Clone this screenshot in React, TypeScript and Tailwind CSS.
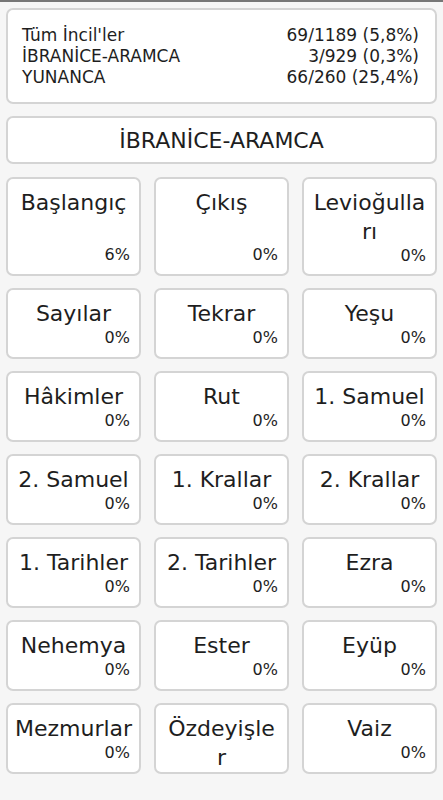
const books = [
  { name: "Başlangıç", pct: "6%" },
  { name: "Çıkış", pct: "0%" },
  { name: "Levioğulları", pct: "0%" },
  { name: "Sayılar", pct: "0%" },
  { name: "Tekrar", pct: "0%" },
  { name: "Yeşu", pct: "0%" },
  { name: "Hâkimler", pct: "0%" },
  { name: "Rut", pct: "0%" },
  { name: "1. Samuel", pct: "0%" },
  { name: "2. Samuel", pct: "0%" },
  { name: "1. Krallar", pct: "0%" },
  { name: "2. Krallar", pct: "0%" },
  { name: "1. Tarihler", pct: "0%" },
  { name: "2. Tarihler", pct: "0%" },
  { name: "Ezra", pct: "0%" },
  { name: "Nehemya", pct: "0%" },
  { name: "Ester", pct: "0%" },
  { name: "Eyüp", pct: "0%" },
  { name: "Mezmurlar", pct: "0%" },
  // title wraps in the app and pushes the percent out of the card
  { name: "Özdeyişle\nr", pct: "" },
  { name: "Vaiz", pct: "0%" },
];

const stats = [
  { label: "Tüm İncil'ler", value: "69/1189 (5,8%)" },
  { label: "İBRANİCE-ARAMCA", value: "3/929 (0,3%)" },
  { label: "YUNANCA", value: "66/260 (25,4%)" },
];

export default function App() {
  return (
    <div className="h-[800px] w-[443px] overflow-hidden bg-[#f6f6f6] font-['DejaVu_Sans',sans-serif] text-[#1e1e1e]">
      <div className="h-[2px] bg-[#777]" />
      <div className="px-[6px] pt-[6px]">
        {/* Summary */}
        <div className="rounded-[7px] border-2 border-[#d4d4d4] bg-white pb-[14px] pl-[14px] pr-[16px] pt-[15px] text-[17px] leading-[21px]">
          {stats.map((s) => (
            <div key={s.label} className="flex justify-between">
              <span>{s.label}</span>
              <span>{s.value}</span>
            </div>
          ))}
        </div>

        <div className="mt-[12px] flex h-[48px] items-center justify-center rounded-[7px] border-2 border-[#d4d4d4] bg-white text-[22px]">
          İBRANİCE-ARAMCA
        </div>

        <div className="mt-[13px] grid grid-cols-3 gap-x-[13px] gap-y-[12px]">
          {books.map((b, i) => (
            <div
              key={b.name}
              className={
                "flex flex-col overflow-hidden rounded-[7px] border-2 border-[#d4d4d4] bg-white pb-[9px] pt-[9px] " +
                (i < 3 ? "h-[99px]" : "h-[71px]")
              }
            >
              <div className="flex-1 whitespace-pre-line break-all px-[6px] text-center text-[22px] leading-[29px]">
                {b.name}
              </div>
              {b.pct && (
                <div className="shrink-0 pr-[9px] text-right text-[16px] leading-[20px]">
                  {b.pct}
                </div>
              )}
            </div>
          ))}
        </div>
      </div>
    </div>
  );
}
